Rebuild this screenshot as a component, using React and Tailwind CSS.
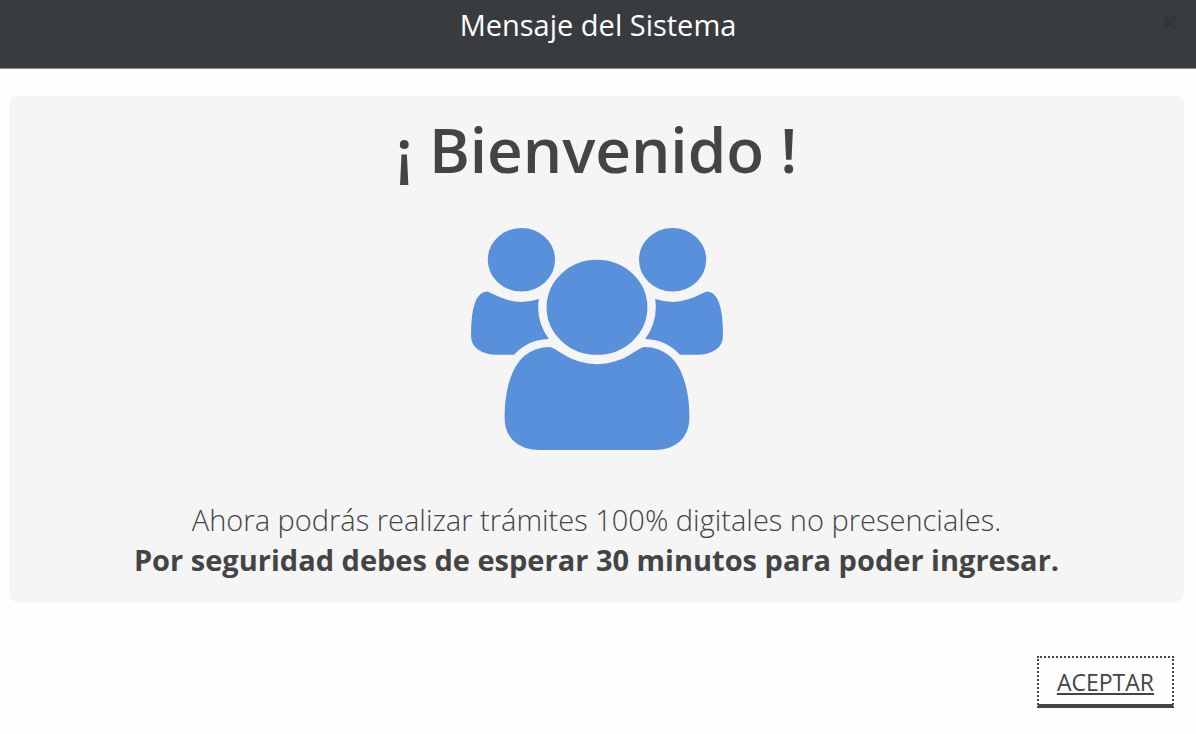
import React from 'react';

function UsersIcon() {
  return (
    <svg viewBox="0 0 1920 1792" className="mt-10 h-[222px] w-[252px] fill-[#5890dc]" preserveAspectRatio="none" aria-hidden="true">
      <path d="M593 896q-162 5-265 128H194q-82 0-138-40.500T0 865q0-353 124-353 6 0 43.500 21t97.500 42.500T384 597q67 0 133-23-5 37-5 66 0 139 81 256zm1071 637q0 120-73 189.500t-194 69.500H523q-121 0-194-69.500T256 1533q0-53 3.500-103.500t14-109T300 1212t43-97.500 62-81 85.500-53.500T602 960q10 0 43 21.500t73 48 107 48 135 21.500 135-21.500 107-48 73-48 43-21.500q61 0 111.500 20t85.500 53.500 62 81 43 97.500 26.500 108.500 14 109 3.500 103.500zM640 256q0 106-75 181t-181 75-181-75-75-181 75-181T384 0t181 75 75 181zm704 384q0 159-112.500 271.500T960 1024 688.500 911.500 576 640t112.500-271.500T960 256t271.500 112.500T1344 640zm576 225q0 78-56 118.500t-138 40.500h-134q-103-123-265-128 81-117 81-256 0-29-5-66 66 23 133 23 59 0 119-21.500t97.500-42.500 43.500-21q124 0 124 353zm-128-609q0 106-75 181t-181 75-181-75-75-181 75-181 181-75 181 75 75 181z" />
    </svg>
  );
}

function CloseIcon() {
  return (
    <svg viewBox="0 0 16 16" className="h-4 w-4" fill="none" stroke="currentColor" strokeWidth="5" strokeLinecap="round" aria-hidden="true">
      <path d="M3.200 3.200l9.600 9.600M12.800 3.200l-9.600 9.600" />
    </svg>
  );
}

export default function App() {
  return (
    <div className="min-h-screen bg-[#fefefe] font-['Open_Sans',sans-serif] text-[#444444]">
      <header className="relative flex justify-center border-b border-[#8a8b8c] bg-[#393c3f] px-4 pt-[7px] pb-[25px] text-white">
        <h2 className="text-[29px] leading-9">Mensaje del Sistema</h2>
        <button aria-label="Cerrar" className="absolute top-3.5 right-[18px] text-[#333537]">
          <CloseIcon />
        </button>
      </header>
      <main className="mt-[27px] mr-3 ml-[9px] flex flex-col items-center rounded-lg bg-[#f5f5f5] pt-[14px] pb-[22px] text-center">
        <h1 className="text-[62px] leading-[78px] font-semibold">¡ Bienvenido !</h1>
        <UsersIcon />
        <p className="mt-[50px] text-[29px] leading-10 font-light">Ahora podrás realizar trámites 100% digitales no presenciales.</p>
        <p className="text-[29px] leading-10 font-bold">Por seguridad debes de esperar 30 minutos para poder ingresar.</p>
      </main>
      <footer className="mt-[54px] flex justify-end pr-[22px]">
        <button className="border-2 border-b-4 border-dotted border-[#444444] px-[18px] pt-[9px] pb-[7px] text-[23px] leading-[30px] underline [border-bottom-style:solid]">ACEPTAR</button>
      </footer>
    </div>
  );
}
